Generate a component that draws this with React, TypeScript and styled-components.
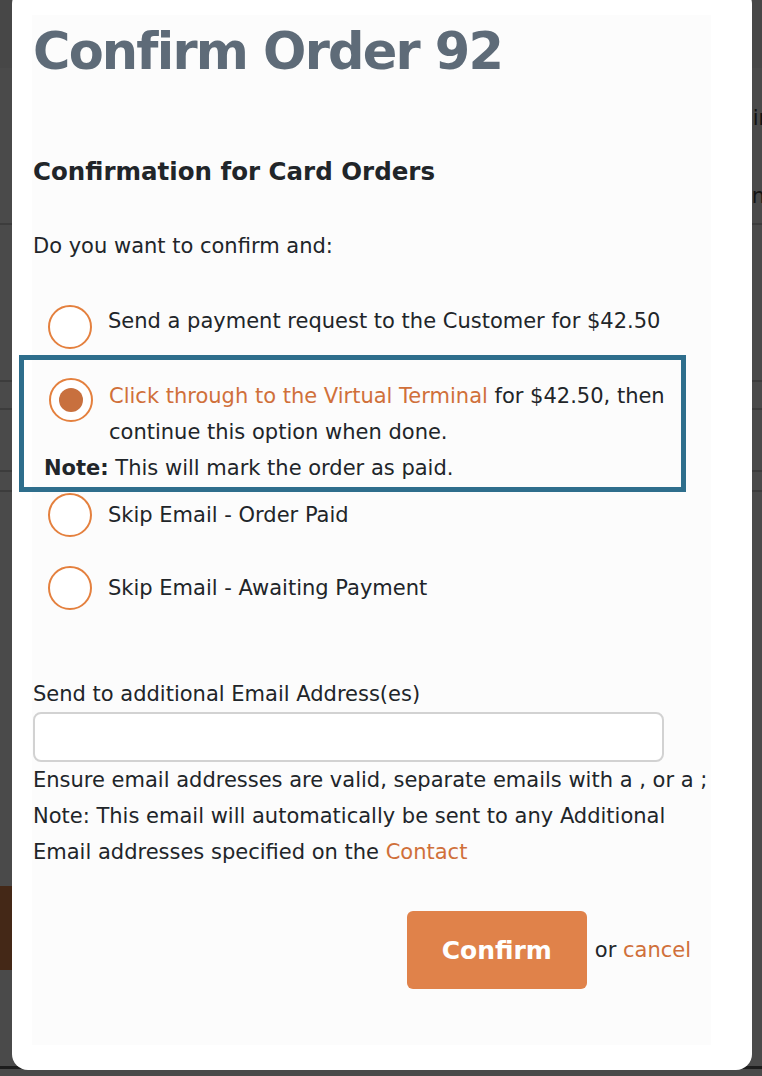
import React from 'react';
import styled, { createGlobalStyle } from 'styled-components';

const GlobalStyle = createGlobalStyle`
    html, body {
        margin: 0;
        padding: 0;
        background: #4a4a4a;
    }
    * {
        box-sizing: border-box;
    }
`;

const FONT = `"DejaVu Sans", Verdana, sans-serif`;
const TEXT = '#212529';
const ORANGE = '#d0703a';

interface OptionData {
    id: string;
    label: string;
}

const options: OptionData[] = [
    { id: 'request', label: 'Send a payment request to the Customer for $42.50' },
    { id: 'paid', label: 'Skip Email - Order Paid' },
    { id: 'awaiting', label: 'Skip Email - Awaiting Payment' },
];

export default function App() {
    return (
        <>
            <GlobalStyle />
            <Backdrop>
                {/* the page behind the dialog, dimmed */}
                <PageBehind>
                    <PageHeader />
                    <PageRow $height={155}>
                        <PageTextColumn>
                            <PageText $offset={705}>Admin</PageText>
                            <PageText $offset={713} $gap={42}>Phone</PageText>
                        </PageTextColumn>
                    </PageRow>
                    <PageRow $height={157} $line />
                    <PageRow $height={28} $line />
                    <PageRow $height={62} $line />
                    <PageRow $height={20} $line />
                    <PageRow $height={396} $line />
                    <BrownBar />
                    <PageRow $height={96} />
                    <PageFooterLine />
                </PageBehind>

                <Modal>
                    <Panel>
                        <Title>Confirm Order 92</Title>
                        <Heading>Confirmation for Card Orders</Heading>
                        <Text>Do you want to confirm and:</Text>

                        <OptionList>
                            <OptionRow>
                                <Radio />
                                <OptionLabel $shift={-2}>{options[0].label}</OptionLabel>
                            </OptionRow>

                            <SelectedBox>
                                <OptionRow>
                                    <Radio $checked />
                                    <OptionLabel>
                                        <Link href="#">Click through to the Virtual Terminal</Link> for $42.50, then
                                        continue this option when done.
                                    </OptionLabel>
                                </OptionRow>
                                <Note><strong>Note:</strong> This will mark the order as paid.</Note>
                            </SelectedBox>

                            <OptionRow $gap={1}>
                                <Radio />
                                <OptionLabel $shift={4}>{options[1].label}</OptionLabel>
                            </OptionRow>
                            <OptionRow $gap={29}>
                                <Radio />
                                <OptionLabel $shift={4}>{options[2].label}</OptionLabel>
                            </OptionRow>
                        </OptionList>

                        <FieldLabel>Send to additional Email Address(es)</FieldLabel>
                        <EmailInput type="text" />
                        <Help>
                            <NoWrap>Ensure email addresses are valid, separate emails with a , or a ;</NoWrap><br />
                            Note: This email will automatically be sent to any Additional
                            Email addresses specified on the <Link href="#">Contact</Link>
                        </Help>

                        <Footer>
                            <ConfirmButton>Confirm</ConfirmButton>
                            <FooterText>or <Link href="#">cancel</Link></FooterText>
                        </Footer>
                    </Panel>
                </Modal>
            </Backdrop>
        </>
    );
}

const Backdrop = styled.div`
    position: relative;
    height: 1076px;
    overflow: hidden;
    background: #4a4a4a;
    font-family: ${FONT};
`;

const PageBehind = styled.div`
    display: flex;
    flex-direction: column;
`;

const PageHeader = styled.div`
    height: 68px;
    flex: none;
    background: #474747;
`;

const PageRow = styled.div<{ $height: number; $line?: boolean }>`
    height: ${p => p.$height}px;
    flex: none;
    border-top: ${p => (p.$line ? '2px solid #3c3c3c' : 'none')};
    overflow: hidden;
    white-space: nowrap;
`;

const PageTextColumn = styled.div`
    display: flex;
    flex-direction: column;
    padding-top: 32px;
`;

const PageText = styled.span<{ $offset: number; $gap?: number }>`
    padding-left: ${p => p.$offset}px;
    margin-top: ${p => p.$gap ?? 0}px;
    font-size: 21px;
    line-height: 36px;
    color: #131313;
`;

const BrownBar = styled.div`
    height: 84px;
    width: 60px;
    flex: none;
    background: #442817;
`;

const PageFooterLine = styled.div`
    height: 3px;
    flex: none;
    background: #1d1d1d;
`;

const Modal = styled.div`
    position: absolute;
    left: 12px;
    top: -12px;
    width: 740px;
    height: 1082px;
    background: #ffffff;
    border-radius: 16px;
    padding: 27px 41px 25px 20px;
`;

const Panel = styled.div`
    height: 100%;
    background: #fcfcfc;
    padding: 0 0 0 1px;
    color: ${TEXT};
    display: flex;
    flex-direction: column;
`;

const Title = styled.h1`
    margin: 12px 0 0;
    font-size: 51px;
    line-height: 50px;
    letter-spacing: -1.8px;
    font-weight: bold;
    color: #5e6b78;
`;

const Heading = styled.h2`
    margin: 77px 0 0;
    font-size: 24.5px;
    line-height: 36px;
    font-weight: bold;
    color: ${TEXT};
`;

const Text = styled.p`
    margin: 38px 0 0;
    font-size: 21px;
    line-height: 36px;
`;

const OptionList = styled.div`
    margin-top: 41px;
    display: flex;
    flex-direction: column;
`;

const OptionRow = styled.div<{ $gap?: number }>`
    display: flex;
    align-items: flex-start;
    gap: 16px;
    padding-left: 15px;
    margin-top: ${p => p.$gap ?? 0}px;
`;

const Radio = styled.span<{ $checked?: boolean }>`
    flex: none;
    width: 44px;
    height: 44px;
    border-radius: 50%;
    border: 2px solid #e4803e;
    background: #ffffff;
    display: flex;
    align-items: center;
    justify-content: center;

    &::after {
        content: '';
        display: ${p => (p.$checked ? 'block' : 'none')};
        width: 24px;
        height: 24px;
        border-radius: 50%;
        background: #c8703e;
    }
`;

const OptionLabel = styled.span<{ $shift?: number }>`
    font-size: 21px;
    line-height: 36px;
    margin-top: ${p => p.$shift ?? 0}px;
    padding-right: 10px;
`;

const SelectedBox = styled.div`
    margin: 6px 0 0 -14px;
    width: 667px;
    border: 5px solid #2e6e8c;
    padding: 18px 0 1px 0;

    ${OptionRow} {
        padding-left: 25px;
    }
`;

const Note = styled.div`
    padding-left: 20px;
    font-size: 21px;
    line-height: 36px;
`;

const Link = styled.a`
    color: ${ORANGE};
    text-decoration: none;
`;

const FieldLabel = styled.label`
    margin-top: 66px;
    font-size: 21px;
    line-height: 36px;
`;

const EmailInput = styled.input`
    width: 631px;
    height: 50px;
    border: 2px solid #d2d2d2;
    border-radius: 8px;
    background: #ffffff;
    font-family: ${FONT};
    font-size: 20px;
    padding: 0 12px;
    outline: none;
`;

const Help = styled.p`
    margin: 0;
    font-size: 21px;
    line-height: 36px;
    padding-right: 20px;
`;

const NoWrap = styled.span`
    white-space: nowrap;
`;

const Footer = styled.div`
    margin-top: 41px;
    padding-right: 20px;
    display: flex;
    align-items: center;
    justify-content: flex-end;
    gap: 8px;
`;

const ConfirmButton = styled.button`
    width: 180px;
    height: 78px;
    border: none;
    border-radius: 6px;
    background: #e0824a;
    color: #ffffff;
    font-family: ${FONT};
    font-size: 25px;
    font-weight: bold;
    cursor: pointer;
`;

const FooterText = styled.span`
    font-size: 21px;
    line-height: 36px;
`;
